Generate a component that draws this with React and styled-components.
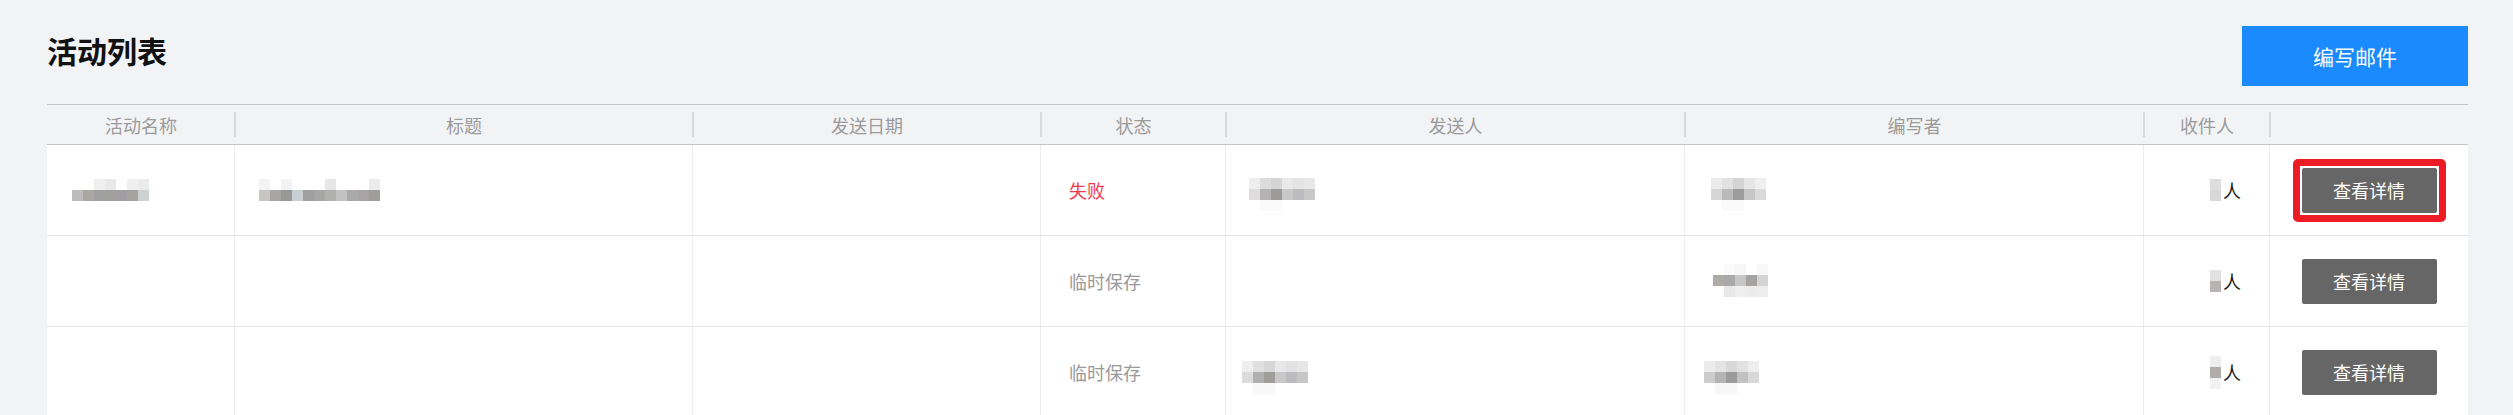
import React from 'react';
import styled, { createGlobalStyle } from 'styled-components';

const COLS = '188px 458px 348px 185px 459px 459px 126px 198px';

const GlobalStyle = createGlobalStyle`
  html, body { margin: 0; padding: 0; background: #f2f3f5; }
  body { font-family: "Noto Sans CJK SC", "Noto Sans", sans-serif; }
  * { box-sizing: border-box; }
`;

const Page = styled.div`
  padding: 26px 45px 0 47px;
`;

const TopBar = styled.div`
  display: flex;
  justify-content: space-between;
  align-items: flex-start;
  height: 60px;
  margin-bottom: 18px;
`;

const Title = styled.h1`
  margin: 6px 0 0 0;
  font-size: 30px;
  line-height: 36px;
  font-weight: 700;
  color: #111;
`;

const ComposeButton = styled.button`
  width: 226px;
  height: 60px;
  border: 0;
  border-radius: 0;
  background: #1a8afe;
  color: #fff;
  font-family: inherit;
  font-size: 21px;
  cursor: pointer;
`;

const Table = styled.div`
  width: 2421px;
`;

const HeaderRow = styled.div`
  display: grid;
  grid-template-columns: ${COLS};
  height: 41px;
  border-top: 1px solid #c4c4c4;
  border-bottom: 1px solid #c4c4c4;
`;

const HeaderCell = styled.div`
  position: relative;
  display: flex;
  align-items: center;
  justify-content: center;
  font-size: 18px;
  color: #9b9b9b;
  &:not(:last-child)::after {
    content: '';
    position: absolute;
    right: -1px;
    top: 7px;
    bottom: 7px;
    width: 2px;
    background: #dadada;
  }
`;

const BodyRow = styled.div`
  display: grid;
  grid-template-columns: ${COLS};
  height: 91px;
  background: #fff;
  border-bottom: 1px solid #e6e6e6;
`;

const BodyCell = styled.div`
  display: flex;
  align-items: center;
  justify-content: ${(p) => p.$justify || 'flex-start'};
  padding-left: ${(p) => p.$padLeft ?? 0}px;
  padding-right: ${(p) => p.$padRight ?? 0}px;
  font-size: 18px;
  color: #222;
  &:not(:last-child) {
    border-right: 1px solid #ececec;
  }
`;

const StatusText = styled.span`
  color: ${(p) => (p.$tone === 'fail' ? '#f03a52' : '#9a9a9a')};
`;

const MosaicGrid = styled.span`
  display: inline-grid;
  grid-template-columns: repeat(${(p) => p.$cols}, 11px);
  grid-auto-rows: 11px;
  margin-left: ${(p) => p.$dx || 0}px;
  margin-top: ${(p) => p.$dy || 0}px;
`;

const MosaicCell = styled.span.attrs((p) => ({ style: { background: p.$c || 'transparent' } }))`
  display: block;
  width: 11px;
  height: 11px;
`;

const Mosaic = ({ rows, dx, dy }) => (
  <MosaicGrid $cols={rows[0].length} $dx={dx} $dy={dy}>
    {rows.flat().map((c, i) => (
      <MosaicCell key={i} $c={c} />
    ))}
  </MosaicGrid>
);

const PersonUnit = styled.span`
  color: #1b1b1b;
  font-size: 18px;
  margin-left: 2px;
`;

const Highlight = styled.span`
  display: inline-flex;
  padding: 2px;
  border: ${(p) => (p.$on ? '7px solid #ed1c24' : '0')};
  border-radius: 5px;
  background: #fff;
`;

const DetailButton = styled.button`
  width: 135px;
  height: 45px;
  border: 0;
  border-radius: 2px;
  background: #666;
  color: #fff;
  font-family: inherit;
  font-size: 18px;
  cursor: pointer;
`;

const headers = ['活动名称', '标题', '发送日期', '状态', '发送人', '编写者', '收件人', ''];

const rows = [
  {
    name: {
      rows: [
        [null, null, '#efefef', '#e9e9e9', null, '#efefef', '#eaeceb'],
        ['#bcbcbc', '#a9a7a2', '#9fa1a1', '#a29f9b', '#a19ea6', '#a6a29e', '#cdd2d2'],
      ],
    },
    title: {
      rows: [
        ['#f3f3f3', null, '#f3f3f3', null, null, null, '#e7e7e7', null, null, null, '#ececec'],
        ['#c8c6c5', '#a8a5a4', '#989899', '#c7cfd2', '#a0a0a0', '#a6a6a6', '#b0b1ae', '#c3c2c2', '#a9aaa8', '#a9a3a8', '#9f9e9c'],
      ],
    },
    status: { tone: 'fail', text: '失败' },
    sender: {
      dx: -1,
      dy: 8,
      rows: [
        ['#eeeeee', '#dcdcdc', '#d4d4d4', '#e9e9e9', '#e4e4e4', '#e8e8e8'],
        ['#dedcdc', '#b3b3b3', '#9d9b98', '#c8c8c8', '#bcbcc0', '#c8c8c8'],
        [null, '#fafafa', '#fafafa', null, null, null],
      ],
    },
    composer: {
      dx: 0,
      dy: 8,
      rows: [
        ['#ebebeb', '#e2e2e2', '#d4d4d4', '#e6e6e6', '#efefef'],
        ['#d6d6d6', '#bababa', '#9c9c9c', '#c6c6c6', '#dadada'],
        [null, '#fafafa', '#fafafa', null, null],
      ],
    },
    recipients: [['#dedede'], ['#d8d8d8']],
    highlight: true,
  },
  {
    name: null,
    title: null,
    status: { tone: 'draft', text: '临时保存' },
    sender: null,
    composer: {
      dx: 2,
      dy: -2,
      rows: [
        [null, '#fafafa', '#f6f6f6', null, '#f8f8f8'],
        ['#aeaca8', '#a9a9ab', '#c6c6c6', '#a6a4a2', '#d2d4d6'],
        [null, '#e8e8e8', '#efefef', '#ececec', '#eeeeee'],
      ],
    },
    recipients: [['#e2e2e2'], ['#b8b4b4']],
    highlight: false,
  },
  {
    name: null,
    title: null,
    status: { tone: 'draft', text: '临时保存' },
    sender: {
      dx: -8,
      dy: 10,
      rows: [
        ['#eeeeee', '#e0e0e0', '#d6d6d6', '#e8e8e8', '#e2e2e2', '#e6e6e6'],
        ['#dcdcdc', '#b0b0b0', '#a09e9b', '#c8c8c8', '#bcbcc0', '#c6c6c6'],
        [null, '#f8f8f8', '#f8f8f8', null, null, null],
      ],
    },
    composer: {
      dx: -7,
      dy: 10,
      rows: [
        ['#ececec', '#e4e4e4', '#d8d8d8', '#e2e2e2', '#eeeeee'],
        ['#cccccc', '#b4b4b4', '#9c9c9c', '#c2c2c2', '#d8d8d8'],
        [null, '#f6f6f6', '#f6f6f6', null, null],
      ],
    },
    recipients: [['#eeeeee'], ['#b0acac'], ['#f2f2f2']],
    highlight: false,
  },
];

const renderMosaic = (m) => (m ? <Mosaic rows={m.rows} dx={m.dx} dy={m.dy} /> : null);

export default function App() {
  return (
    <>
      <GlobalStyle />
      <Page>
        <TopBar>
          <Title>活动列表</Title>
          <ComposeButton>编写邮件</ComposeButton>
        </TopBar>
        <Table>
          <HeaderRow>
            {headers.map((h, i) => (
              <HeaderCell key={i}>{h}</HeaderCell>
            ))}
          </HeaderRow>
          {rows.map((r, i) => (
            <BodyRow key={i}>
              <BodyCell $padLeft={25}>{renderMosaic(r.name)}</BodyCell>
              <BodyCell $padLeft={24}>{renderMosaic(r.title)}</BodyCell>
              <BodyCell $padLeft={24} />
              <BodyCell $padLeft={28}>
                <StatusText $tone={r.status.tone}>{r.status.text}</StatusText>
              </BodyCell>
              <BodyCell $padLeft={24}>{renderMosaic(r.sender)}</BodyCell>
              <BodyCell $padLeft={26}>{renderMosaic(r.composer)}</BodyCell>
              <BodyCell $justify="flex-end" $padRight={28}>
                <Mosaic rows={r.recipients} />
                <PersonUnit>人</PersonUnit>
              </BodyCell>
              <BodyCell $justify="center">
                <Highlight $on={r.highlight}>
                  <DetailButton>查看详情</DetailButton>
                </Highlight>
              </BodyCell>
            </BodyRow>
          ))}
        </Table>
      </Page>
    </>
  );
}
